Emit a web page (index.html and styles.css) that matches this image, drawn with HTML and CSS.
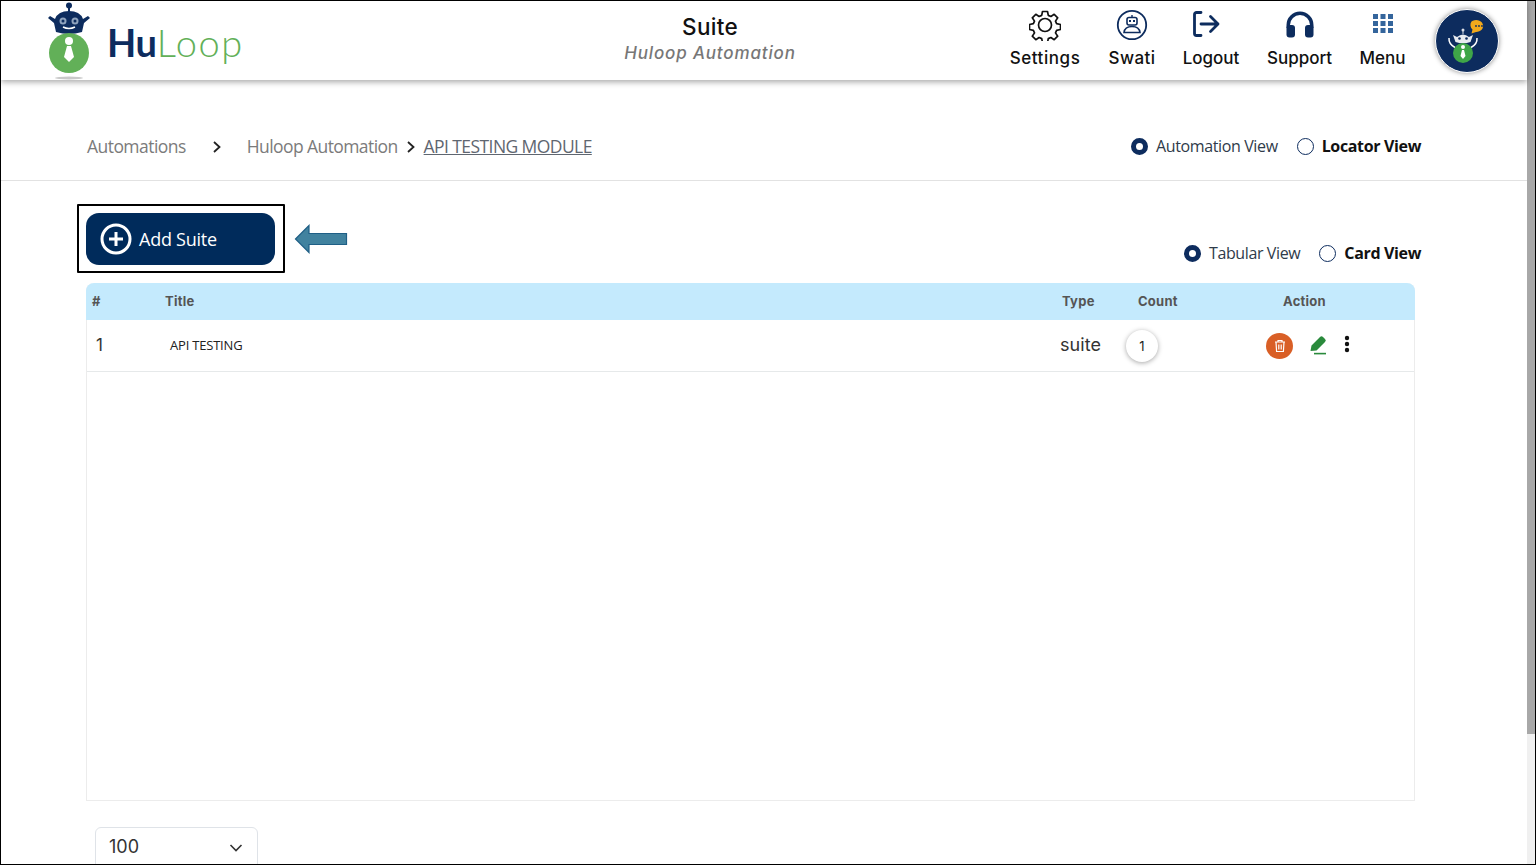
FILE: index.html
```html
<!DOCTYPE html>
<html lang="en">
<head>
<meta charset="utf-8">
<title>Suite - HuLoop</title>
<link rel="stylesheet" href="styles.css">
</head>
<body>
<div class="frame">
  <div class="page">
    <header class="topbar">
      <div class="brand">
        <svg class="brand-mark" viewBox="0 0 44 78" width="44" height="78" aria-hidden="true">
          <circle cx="22" cy="3.500" r="3" fill="#0d2c5e"/>
          <rect x="21" y="5" width="2" height="5" fill="#0d2c5e"/>
          <path d="M8 17 L3 14 L1 16 L7 21 L9 30 Q22 34 35 30 L37 21 L43 16 L41 14 L36 17 Q33 9 22 9 Q11 9 8 17Z" fill="#0d2c5e"/>
          <circle cx="16" cy="19" r="3.500" fill="#8fa3bd"/><circle cx="28" cy="19" r="3.500" fill="#8fa3bd"/>
          <circle cx="16" cy="19" r="1.500" fill="#0d2c5e"/><circle cx="28" cy="19" r="1.500" fill="#0d2c5e"/>
          <path d="M16 25 Q22 28 28 25" stroke="#fff" stroke-width="1.500" fill="none"/>
          <circle cx="22" cy="51" r="20" fill="#62b058"/>
          <circle cx="22" cy="39" r="4" fill="#fff"/>
          <path d="M20 44 H24 L27 55 L22 60 L17 55Z" fill="#fff"/>
          <ellipse cx="22" cy="76" rx="14" ry="1.500" fill="#c9c9c9"/>
        </svg>
        <span class="wordmark"><b>Hu</b>Loop</span>
      </div>
      <div class="heading">
        <div class="heading-title">Suite</div>
        <div class="heading-sub">Huloop Automation</div>
      </div>
      <nav class="nav">
        <a class="nav-item nav-settings">
          <svg viewBox="0 0 32 32" width="32" height="32" fill="none" stroke="#111" stroke-width="1.700" stroke-linejoin="round"><path d="M13.500 2.500h5l.8 3.900 2.600 1.100 3.300-2.200 3.500 3.500-2.200 3.300 1.100 2.600 3.900.8v5l-3.900.8-1.100 2.600 2.200 3.300-3.500 3.500-3.300-2.200-2.600 1.100-.8 3.900h-5l-.8-3.900-2.600-1.100-3.300 2.200-3.500-3.500 2.200-3.300-1.100-2.600-3.900-.8v-5l3.900-.8 1.100-2.600-2.200-3.300 3.500-3.500 3.300 2.200 2.600-1.100z"/><circle cx="16" cy="16" r="6.500"/></svg>
          <span>Settings</span>
        </a>
        <a class="nav-item nav-swati">
          <svg viewBox="0 0 32 32" width="32" height="32" aria-hidden="true"><circle cx="16" cy="16" r="14.200" fill="none" stroke="#0d2c5e" stroke-width="1.800"/><rect x="11" y="8.500" width="10" height="7.500" rx="2" fill="none" stroke="#0d2c5e" stroke-width="1.600"/><rect x="13" y="11" width="2" height="2" fill="#0d2c5e"/><rect x="17" y="11" width="2" height="2" fill="#0d2c5e"/><rect x="15.300" y="6" width="1.400" height="2.500" fill="#0d2c5e"/><path d="M8 23.500c.5-3.800 3.800-6 8-6s7.500 2.200 8 6z" fill="none" stroke="#0d2c5e" stroke-width="1.600"/></svg>
          <span>Swati</span>
        </a>
        <a class="nav-item nav-logout">
          <svg viewBox="0 0 32 32" width="32" height="32" fill="none" stroke="#0d2c5e" stroke-width="2.800" stroke-linecap="round" stroke-linejoin="round"><path d="M11 3.500H6.500a2 2 0 0 0-2 2v19a2 2 0 0 0 2 2H11"/><path d="M11 15h17M20.500 7.500 28 15l-7.500 7.500"/></svg>
          <span>Logout</span>
        </a>
        <a class="nav-item nav-support">
          <svg viewBox="0 0 32 32" width="32" height="32" aria-hidden="true"><path d="M2.500 19v-3a13.500 13.500 0 0 1 27 0v3h-3.500v-3a10 10 0 0 0-20 0v3z" fill="#0d2c5e"/><rect x="2.500" y="16" width="8.500" height="12.500" rx="3" fill="#0d2c5e"/><rect x="21" y="16" width="8.500" height="12.500" rx="3" fill="#0d2c5e"/></svg>
          <span>Support</span>
        </a>
        <a class="nav-item nav-menu">
          <svg viewBox="0 0 32 32" width="32" height="32" fill="#34659c"><rect x="6" y="5" width="5" height="5"/><rect x="13.500" y="5" width="5" height="5"/><rect x="21" y="5" width="5" height="5"/><rect x="6" y="12" width="5" height="5"/><rect x="13.500" y="12" width="5" height="5"/><rect x="21" y="12" width="5" height="5"/><rect x="6" y="19" width="5" height="5"/><rect x="13.500" y="19" width="5" height="5"/><rect x="21" y="19" width="5" height="5"/></svg>
          <span>Menu</span>
        </a>
        <div class="assistant">
          <svg viewBox="0 0 62 62" width="62" height="62" aria-hidden="true">
            <path d="M35.500 11.500a7 6 0 1 1 4.500 10.500l-4.500 1.500 1-4a6 6 0 0 1-1-8z" fill="#f2a91c"/>
            <circle cx="40" cy="16" r=".9" fill="#0d2c5e"/><circle cx="43" cy="16" r=".9" fill="#0d2c5e"/><circle cx="46" cy="16" r=".9" fill="#0d2c5e"/>
            <circle cx="27" cy="20" r="1.500" fill="#d8dde6"/>
            <rect x="26.500" y="20" width="1" height="4" fill="#d8dde6"/>
            <path d="M17 25l4 2q6-5 12 0l4-2-2.500 7q-7.500 2.500-15 0z" fill="#e8ebf0"/>
            <circle cx="23.500" cy="28.500" r="1.300" fill="#0d2c5e"/><circle cx="30.500" cy="28.500" r="1.300" fill="#0d2c5e"/>
            <path d="M13 28q-.5 6 6 9.500M41 28q.5 6-6 9.500" stroke="#fff" stroke-width="1.500" fill="none"/>
            <circle cx="27" cy="43" r="10" fill="#3fa648"/>
            <circle cx="27" cy="37" r="2" fill="#fff"/>
            <path d="M26 40h2l1.500 6-2.500 3-2.500-3z" fill="#fff"/>
          </svg>
        </div>
      </nav>
    </header>

    <section class="crumbs">
      <div class="crumb-trail">
        <a class="crumb crumb-root">Automations</a>
        <svg class="chev chev-wide" viewBox="0 0 10 14" width="10" height="14"><path d="M2 2l5.500 5L2 12" fill="none" stroke="#222" stroke-width="1.800"/></svg>
        <a class="crumb crumb-mid">Huloop Automation</a>
        <svg class="chev" viewBox="0 0 10 14" width="10" height="14"><path d="M2 2l5.500 5L2 12" fill="none" stroke="#222" stroke-width="1.800"/></svg>
        <a class="crumb crumb-current">API TESTING MODULE</a>
      </div>
      <div class="view-switch">
        <span class="radio on"></span><span class="radio-label">Automation View</span>
        <span class="radio radio-gap"></span><strong class="radio-label">Locator View</strong>
      </div>
    </section>

    <main class="content">
      <div class="toolbar">
        <div class="callout">
          <button class="add-btn">
            <svg viewBox="0 0 32 32" width="32" height="32" fill="none" stroke="#fff"><circle cx="16" cy="16" r="14" stroke-width="3"/><path d="M16 9v14M9 16h14" stroke-width="3"/></svg>
            <span>Add Suite</span>
          </button>
        </div>
        <svg class="arrow" viewBox="0 0 54 30" width="54" height="30" aria-hidden="true"><path d="M1.500 15 15 1.500V9.500H52.500V20.500H15V28.500Z" fill="#41829f" stroke="#1f5f86" stroke-width="1.200"/></svg>
        <div class="view-switch card-switch">
          <span class="radio on"></span><span class="radio-label">Tabular View</span>
          <span class="radio radio-gap"></span><strong class="radio-label">Card View</strong>
        </div>
      </div>

      <div class="table">
        <div class="row head">
          <div class="c-num">#</div>
          <div class="c-title">Title</div>
          <div class="c-type">Type</div>
          <div class="c-count">Count</div>
          <div class="c-action">Action</div>
        </div>
        <div class="row body-row">
          <div class="c-num">1</div>
          <div class="c-title">API TESTING</div>
          <div class="c-type">suite</div>
          <div class="c-count"><span class="count-pill">1</span></div>
          <div class="c-action actions">
            <span class="del"><svg viewBox="0 0 14 14" width="14" height="14" fill="none" stroke="#fff" stroke-width="1.200"><path d="M2 3h10M5 3V1.500h4V3M3 3l.6 9.500h6.800L11 3M5.800 5.500v5M8.200 5.500v5"/></svg></span>
            <svg class="edit" viewBox="0 0 18 20" width="18" height="20" aria-hidden="true"><path d="M1.500 16 2.500 10.500 11 2a2 2 0 0 1 3 0l2 2a2 2 0 0 1 0 3L7.500 15.500z" fill="#2a8a3c"/><rect x="5" y="17.800" width="12" height="1.600" fill="#2a8a3c"/></svg>
            <svg class="kebab" viewBox="0 0 6 18" width="6" height="18" fill="#111"><circle cx="3" cy="3" r="2.200"/><circle cx="3" cy="9" r="2.200"/><circle cx="3" cy="15" r="2.200"/></svg>
          </div>
        </div>
      </div>

      <div class="pager">
        <span>100</span>
        <svg viewBox="0 0 14 10" width="14" height="10"><path d="M1.500 2 7 7.500 12.500 2" fill="none" stroke="#333" stroke-width="1.600"/></svg>
      </div>
    </main>
  </div>
  <div class="scrollbar"><div class="thumb"></div></div>
</div>
</body>
</html>
```
FILE: styles.css
```css
* { box-sizing: border-box; }
html, body { margin: 0; height: 865px; overflow: hidden; background: #fff; }
body { font-family: "Open Sans", sans-serif; color: #111; }

.frame { height: 865px; border: 1px solid #000; display: flex; overflow: hidden; }
.page { flex: 1; min-width: 0; display: flex; flex-direction: column; }
.scrollbar { width: 8px; background: #f0f0f0; }
.thumb { height: 733px; background: #a8a8a8; }

.topbar { height: 79px; flex: none; display: flex; align-items: center; box-shadow: 0 2px 6px rgba(0, 0, 0, .35); position: relative; background: #fff; }
.brand { width: 424px; flex: none; padding-left: 46px; display: flex; align-items: center; gap: 16px; }
.brand-mark { display: block; }
.wordmark { font-family: Lato, sans-serif; font-size: 38px; line-height: 44px; padding-top: 3px; color: #62b058; font-weight: 300; letter-spacing: 1.600px; }
.wordmark b { color: #0d2c5e; font-weight: 700; letter-spacing: -.3px; }
.heading { width: 570px; flex: none; text-align: center; margin-top: -3px; }
.heading-title { font-family: Inter, sans-serif; font-size: 22.500px; line-height: 28px; font-weight: 500; letter-spacing: .3px; color: #111; }
.heading-sub { font-family: Inter, sans-serif; font-size: 17px; line-height: 24px; font-style: italic; font-weight: 500; letter-spacing: .85px; color: #777; }

.nav { flex: 1; display: flex; align-items: flex-start; height: 100%; padding-top: 8px; }
.nav-item { display: flex; flex-direction: column; align-items: center; flex: none; font-family: Inter, sans-serif; font-size: 17px; font-weight: 500; line-height: 20px; color: #111; }
.nav-item svg { margin-bottom: 6.500px; }
.nav-settings { width: 70px; margin-left: 15px; letter-spacing: .55px; }
.nav-swati { width: 48px; margin-left: 28px; letter-spacing: .4px; }
.nav-logout { width: 56px; margin-left: 27px; }
.nav-logout svg { margin-right: 10px; }
.nav-support { width: 65px; margin-left: 28px; }
.nav-menu { width: 45px; margin-left: 28px; }
.assistant { width: 64px; height: 64px; margin: 0 0 0 30px; border-radius: 50%; background: #0d2c5e; border: 1px solid #fff; box-shadow: 0 0 5px rgba(0, 0, 0, .45); flex: none; }
.assistant svg { display: block; }

.crumbs { height: 101px; flex: none; padding: 32px 106px 0 86px; border-bottom: 1px solid #e2e2e2; display: flex; align-items: center; justify-content: space-between; }
.crumb-trail { display: flex; align-items: center; font-size: 17.500px; letter-spacing: -.55px; color: #7b7b7b; }
.crumb { color: #7b7b7b; }
.chev { flex: none; }
.chev-wide { margin: 2px 25px 0 26px; }
.crumb-mid { letter-spacing: -.58px; }
.crumb-mid + .chev { margin: 2px 8px 0 8px; }
.crumb-current { color: #5f6670; text-decoration: underline; letter-spacing: -.58px; }

.view-switch { display: flex; align-items: center; font-size: 16px; letter-spacing: -.38px; color: #2f3b4a; }
.view-switch strong { color: #111; letter-spacing: -.35px; }
.radio { width: 17px; height: 17px; border-radius: 50%; border: 1.500px solid #0d2c5e; margin-right: 8px; flex: none; background: #fff; }
.radio.on { border: 5.500px solid #0d2c5e; }
.radio-gap { margin-left: 19px; }

.content { flex: 1; min-height: 0; padding: 23px 0 0 85px; }
.toolbar { height: 79px; width: 1344px; display: flex; align-items: flex-start; position: relative; margin-left: -9px; }
.callout { width: 208px; height: 69px; border: 2px solid #000; padding: 7px; flex: none; border-radius: 1px; }
.add-btn { width: 189px; height: 52px; margin: 0; border: 0; border-radius: 13px; background: #002b5b; color: #fff; display: flex; align-items: center; gap: 7px; padding: 0 0 0 14px; font: 400 18px "Open Sans", sans-serif; letter-spacing: -.25px; }
.add-btn svg { flex: none; }
.arrow { margin: 20px 0 0 9px; flex: none; }
.card-switch { margin-left: auto; margin-top: 38px; }

.table { width: 1329px; height: 518px; border: 1px solid #ececec; border-top: 0; border-radius: 8px 8px 0 0; }
.row { display: flex; align-items: center; position: relative; }
.head { height: 37px; padding-bottom: 1px; background: #c4eafd; border-radius: 8px 8px 0 0; margin: 0 -1px; font-family: Inter, sans-serif; font-size: 13px; font-weight: 700; letter-spacing: .25px; color: #555; }
.body-row { height: 52px; padding-bottom: 2px; border-bottom: 1px solid #e6e9ea; }
.c-num { width: 78px; padding-left: 6px; flex: none; }
.c-title { width: 897px; flex: none; }
.c-type { width: 75px; flex: none; }
.c-count { width: 117px; flex: none; }
.c-action { width: 100px; flex: none; }
.head .c-title { padding-left: 1px; }
.head .c-type { padding-left: 1px; }
.head .c-count { padding-left: 2px; }
.head .c-action { padding-left: 30px; }
.body-row .c-num { padding-left: 9px; font-family: Inter, sans-serif; font-size: 17px; color: #333; }
.body-row .c-title { font-size: 13px; padding-left: 5px; color: #222; letter-spacing: -.2px; }
.body-row .c-type { font-family: Inter, sans-serif; font-size: 18px; margin-left: -2px; color: #333; letter-spacing: .05px; }
.c-count .count-pill { margin-top: 2px; }
.count-pill { width: 32px; height: 32px; border-radius: 50%; background: #fff; box-shadow: 0 1px 5px rgba(0, 0, 0, .35); display: flex; align-items: center; justify-content: center; font-family: Inter, sans-serif; font-size: 13px; margin-left: -9px; color: #222; }
.actions { display: flex; align-items: center; margin: 2px 0 0 14px; }
.del { width: 27px; height: 26px; border-radius: 50%; background: #d95f26; display: flex; align-items: center; justify-content: center; flex: none; }
.edit { margin-left: 16px; flex: none; margin-top: -1px; }
.kebab { margin: -4px 0 0 17px; flex: none; }

.pager { width: 163px; height: 50px; margin: 26px 0 0 9px; border: 1px solid #dfe3e8; border-radius: 6px; display: flex; align-items: flex-start; justify-content: space-between; padding: 8px 14px 0 13px; font-family: Inter, sans-serif; font-size: 18px; color: #333; }
.pager svg { margin-top: 7px; }
```
